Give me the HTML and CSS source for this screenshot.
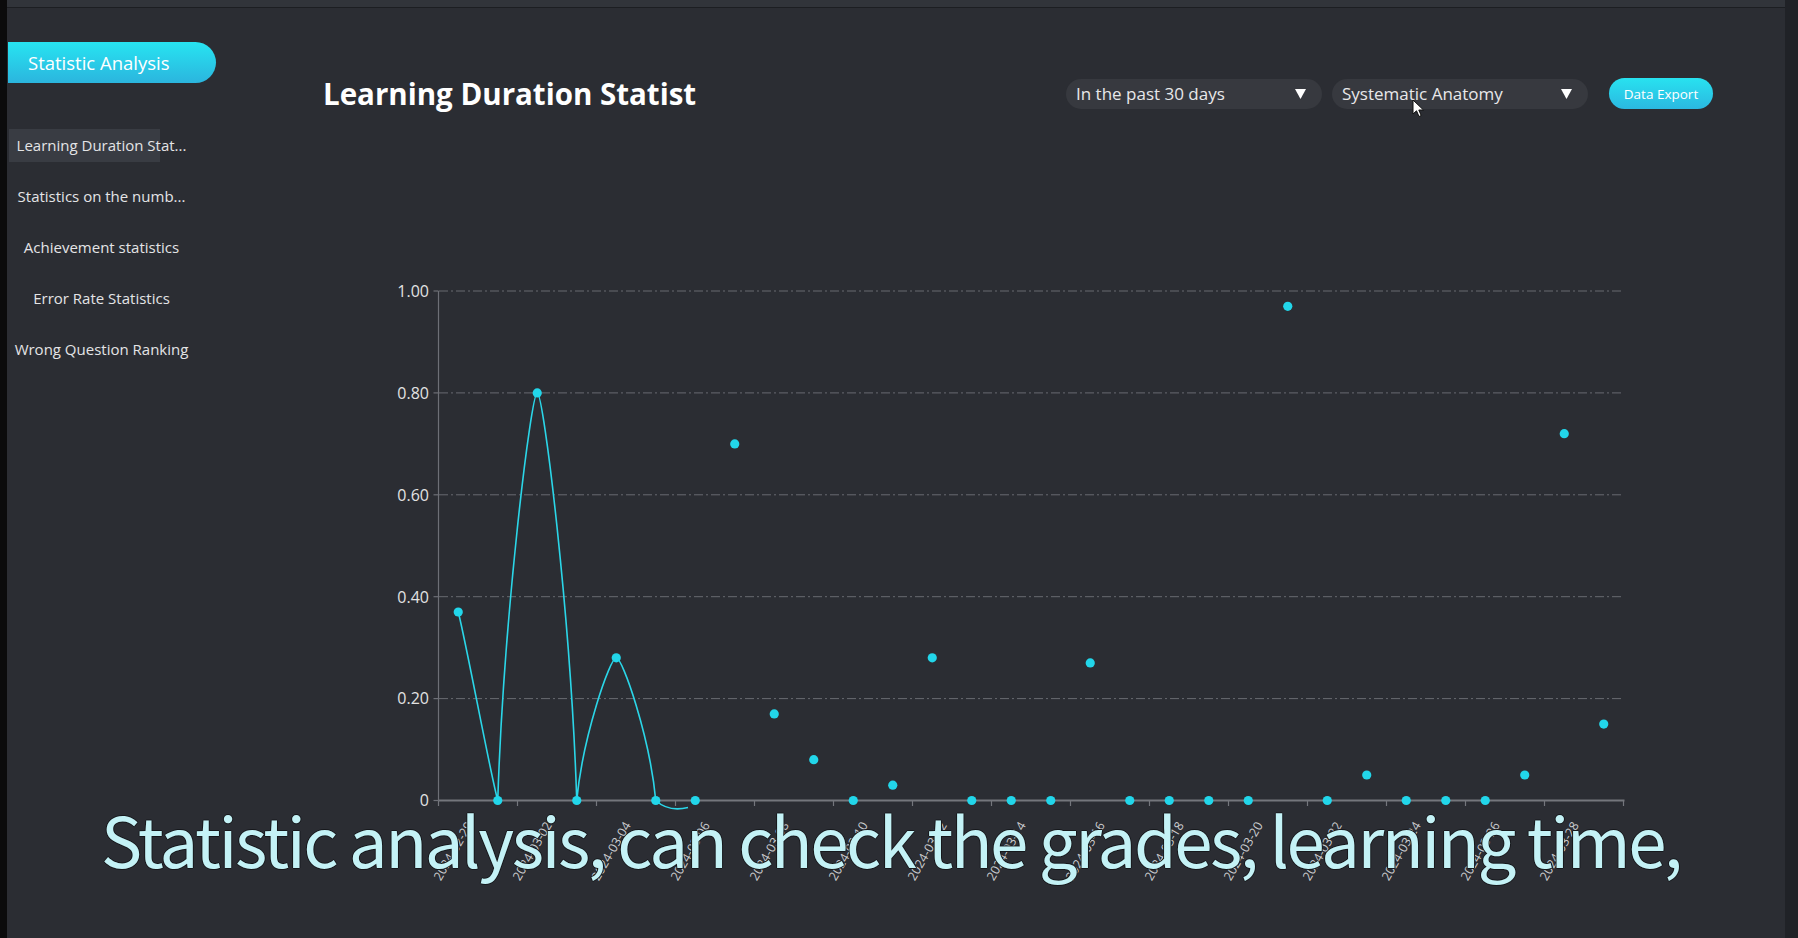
FILE: index.html
```html
<!DOCTYPE html>
<html lang="en">
<head>
<meta charset="utf-8">
<title>Learning Duration Statistics</title>
<link rel="stylesheet" href="styles.css">
</head>
<body>
<div class="app">
  <div class="edge-left"></div>
  <div class="frame">
    <div class="topbar"></div>
    <div class="content">
      <aside class="sidebar">
        <div class="side-head">Statistic Analysis</div>
        <ul class="menu">
          <li class="menu-item active">Learning Duration Stat...</li>
          <li class="menu-item">Statistics on the numb...</li>
          <li class="menu-item">Achievement statistics</li>
          <li class="menu-item">Error Rate Statistics</li>
          <li class="menu-item">Wrong Question Ranking</li>
        </ul>
      </aside>
      <main class="main">
        <header class="header">
          <h1 class="title">Learning Duration Statist</h1>
          <div class="controls">
            <div class="select"><span>In the past 30 days</span><svg class="caret" width="11" height="10" viewBox="0 0 11 10"><polygon points="0,0 11,0 5.5,10" fill="#ffffff"/></svg></div>
            <div class="select"><span>Systematic Anatomy</span><svg class="caret" width="11" height="10" viewBox="0 0 11 10"><polygon points="0,0 11,0 5.5,10" fill="#ffffff"/></svg></div>
            <button class="export">Data Export</button>
          </div>
        </header>
        <svg class="chart" width="1568" height="829" viewBox="217 109 1568 829">
          <g class="grid" stroke="#686a71" stroke-width="1" stroke-dasharray="9 3 2 3" fill="none">
            <line x1="439" y1="291" x2="1623.5" y2="291"/>
            <line x1="439" y1="392.9" x2="1623.5" y2="392.9"/>
            <line x1="439" y1="494.8" x2="1623.5" y2="494.8"/>
            <line x1="439" y1="596.7" x2="1623.5" y2="596.7"/>
            <line x1="439" y1="698.6" x2="1623.5" y2="698.6"/>
          </g>
          <g stroke="#6d6f76" stroke-width="1.2" fill="none">
            <line x1="438.5" y1="291" x2="438.5" y2="800.5"/>
            <line x1="433.5" y1="291" x2="438.5" y2="291"/>
            <line x1="433.5" y1="392.9" x2="438.5" y2="392.9"/>
            <line x1="433.5" y1="494.8" x2="438.5" y2="494.8"/>
            <line x1="433.5" y1="596.7" x2="438.5" y2="596.7"/>
            <line x1="433.5" y1="698.6" x2="438.5" y2="698.6"/>
            <line x1="433.5" y1="800.5" x2="438.5" y2="800.5"/>
          </g>
          <g class="ylabels" fill="#e2e2e2" font-size="16" text-anchor="end">
            <text x="429" y="296.8">1.00</text>
            <text x="429" y="398.7">0.80</text>
            <text x="429" y="500.6">0.60</text>
            <text x="429" y="602.5">0.40</text>
            <text x="429" y="704.4">0.20</text>
            <text x="429" y="806.3">0</text>
          </g>
          <g stroke="#74767c" fill="none">
            <line x1="438.5" y1="800.5" x2="1624.5" y2="800.5" stroke-width="2"/>
            <g stroke-width="1.2">
              <line x1="438.5" y1="800.5" x2="438.5" y2="806"/>
              <line x1="517.5" y1="800.5" x2="517.5" y2="806"/>
              <line x1="596.5" y1="800.5" x2="596.5" y2="806"/>
              <line x1="675.5" y1="800.5" x2="675.5" y2="806"/>
              <line x1="754.5" y1="800.5" x2="754.5" y2="806"/>
              <line x1="833.5" y1="800.5" x2="833.5" y2="806"/>
              <line x1="912.5" y1="800.5" x2="912.5" y2="806"/>
              <line x1="991.5" y1="800.5" x2="991.5" y2="806"/>
              <line x1="1070.5" y1="800.5" x2="1070.5" y2="806"/>
              <line x1="1149.5" y1="800.5" x2="1149.5" y2="806"/>
              <line x1="1228.5" y1="800.5" x2="1228.5" y2="806"/>
              <line x1="1307.5" y1="800.5" x2="1307.5" y2="806"/>
              <line x1="1386.5" y1="800.5" x2="1386.5" y2="806"/>
              <line x1="1465.5" y1="800.5" x2="1465.5" y2="806"/>
              <line x1="1544.5" y1="800.5" x2="1544.5" y2="806"/>
              <line x1="1623.5" y1="800.5" x2="1623.5" y2="806"/>
            </g>
          </g>
          <g class="xlabels" fill="#cdced1" font-size="12.5" text-anchor="end">
            <text x="473.25" y="825" transform="rotate(-60 473.25 825)">2024-02-29</text>
            <text x="552.25" y="825" transform="rotate(-60 552.25 825)">2024-03-02</text>
            <text x="631.25" y="825" transform="rotate(-60 631.25 825)">2024-03-04</text>
            <text x="710.25" y="825" transform="rotate(-60 710.25 825)">2024-03-06</text>
            <text x="789.25" y="825" transform="rotate(-60 789.25 825)">2024-03-08</text>
            <text x="868.25" y="825" transform="rotate(-60 868.25 825)">2024-03-10</text>
            <text x="947.25" y="825" transform="rotate(-60 947.25 825)">2024-03-12</text>
            <text x="1026.25" y="825" transform="rotate(-60 1026.25 825)">2024-03-14</text>
            <text x="1105.25" y="825" transform="rotate(-60 1105.25 825)">2024-03-16</text>
            <text x="1184.25" y="825" transform="rotate(-60 1184.25 825)">2024-03-18</text>
            <text x="1263.25" y="825" transform="rotate(-60 1263.25 825)">2024-03-20</text>
            <text x="1342.25" y="825" transform="rotate(-60 1342.25 825)">2024-03-22</text>
            <text x="1421.25" y="825" transform="rotate(-60 1421.25 825)">2024-03-24</text>
            <text x="1500.25" y="825" transform="rotate(-60 1500.25 825)">2024-03-26</text>
            <text x="1579.25" y="825" transform="rotate(-60 1579.25 825)">2024-03-28</text>
          </g>
          <path class="series" fill="none" stroke="#2bd6e8" stroke-width="1.6" d="M458.25 612 C466 642 490 772 497.75 800.5 C503.7 617 531 392.9 537.25 392.9 C543.5 392.9 570.8 617 576.75 800.5 C582.7 736.7 610 657.8 616.25 657.8 C622.5 657.8 649.8 736.7 655.75 800.5 C664 808 674 811 688 807.5"/>
          <g class="dots" fill="#22d6ea">
            <circle cx="458.25" cy="612" r="4.6"/>
            <circle cx="497.75" cy="800.5" r="4.6"/>
            <circle cx="537.25" cy="392.9" r="4.6"/>
            <circle cx="576.75" cy="800.5" r="4.6"/>
            <circle cx="616.25" cy="657.8" r="4.6"/>
            <circle cx="655.75" cy="800.5" r="4.6"/>
            <circle cx="695.25" cy="800.5" r="4.6"/>
            <circle cx="734.75" cy="443.9" r="4.6"/>
            <circle cx="774.25" cy="713.9" r="4.6"/>
            <circle cx="813.75" cy="759.7" r="4.6"/>
            <circle cx="853.25" cy="800.5" r="4.6"/>
            <circle cx="892.75" cy="785.2" r="4.6"/>
            <circle cx="932.25" cy="657.8" r="4.6"/>
            <circle cx="971.75" cy="800.5" r="4.6"/>
            <circle cx="1011.25" cy="800.5" r="4.6"/>
            <circle cx="1050.75" cy="800.5" r="4.6"/>
            <circle cx="1090.25" cy="662.9" r="4.6"/>
            <circle cx="1129.75" cy="800.5" r="4.6"/>
            <circle cx="1169.25" cy="800.5" r="4.6"/>
            <circle cx="1208.75" cy="800.5" r="4.6"/>
            <circle cx="1248.25" cy="800.5" r="4.6"/>
            <circle cx="1287.75" cy="306.3" r="4.6"/>
            <circle cx="1327.25" cy="800.5" r="4.6"/>
            <circle cx="1366.75" cy="775" r="4.6"/>
            <circle cx="1406.25" cy="800.5" r="4.6"/>
            <circle cx="1445.75" cy="800.5" r="4.6"/>
            <circle cx="1485.25" cy="800.5" r="4.6"/>
            <circle cx="1524.75" cy="775" r="4.6"/>
            <circle cx="1564.25" cy="433.7" r="4.6"/>
            <circle cx="1603.75" cy="724.1" r="4.6"/>
          </g>
        </svg>
      </main>
    </div>
  </div>
  <div class="edge-right"></div>
  <div class="caption">Statistic analysis, can check the grades, learning time,</div>
  <svg class="cursor" width="13" height="19" viewBox="0 0 13 19"><path d="M1 1 L1 15 L4.5 11.8 L7 17.5 L9.2 16.5 L6.8 11 L11.5 11 Z" fill="#ffffff" stroke="#111111" stroke-width="1"/></svg>
</div>
</body>
</html>
```

FILE: styles.css
```css
html, body {
  margin: 0;
  padding: 0;
}

body {
  background: #2b2d33;
  font-family: "Open Sans", "Liberation Sans", sans-serif;
  overflow: hidden;
}

.app {
  position: relative;
  display: flex;
  width: 1798px;
  height: 938px;
  background: #2b2d33;
}

.edge-left {
  flex: none;
  width: 7px;
  background: #0b0b0c;
}

.edge-right {
  flex: none;
  width: 13px;
  background: #202227;
}

.frame {
  flex: 1;
  min-width: 0;
  display: flex;
  flex-direction: column;
}

.topbar {
  flex: none;
  height: 7px;
  background: #31343a;
  border-bottom: 1px solid #1c1e22;
}

.content {
  flex: 1;
  display: flex;
  min-height: 0;
}

.sidebar {
  flex: none;
  width: 210px;
  padding-left: 1px;
  box-sizing: border-box;
}

.side-head {
  margin-top: 34px;
  width: 208px;
  height: 41px;
  box-sizing: border-box;
  padding-left: 20px;
  border-radius: 0 21px 21px 0;
  background: linear-gradient(180deg, #27e4f1 0%, #2bb5de 100%);
  color: #ffffff;
  font-size: 18.5px;
  line-height: 41px;
  white-space: nowrap;
}

.menu {
  list-style: none;
  margin: 46px 0 0;
  padding: 0;
  width: 187px;
  display: flex;
  flex-direction: column;
  gap: 18px;
}

.menu-item {
  height: 33px;
  line-height: 33px;
  text-align: center;
  font-size: 15px;
  color: #e4e4e6;
  white-space: nowrap;
}

.menu-item.active {
  background: linear-gradient(90deg, transparent 0, transparent 1px, #393c43 1px, #393c43 152px, transparent 152px);
}

.main {
  flex: 1;
  min-width: 0;
  display: flex;
  flex-direction: column;
}

.header {
  margin-top: 70px;
  height: 31px;
  display: flex;
  align-items: center;
  justify-content: space-between;
  padding: 0 72px 0 106px;
}

.title {
  margin: 0;
  font-size: 29.5px;
  font-weight: 700;
  line-height: 31px;
  color: #ffffff;
  white-space: nowrap;
}

.controls {
  display: flex;
  align-items: center;
}

.select {
  width: 256px;
  height: 30px;
  box-sizing: border-box;
  padding: 0 16px 0 10px;
  border-radius: 15px;
  background: #37393f;
  display: flex;
  align-items: center;
  justify-content: space-between;
  font-size: 17px;
  color: #e8e8ea;
  white-space: nowrap;
}

.select + .select {
  margin-left: 10px;
}

.caret {
  display: block;
  flex: none;
}

.export {
  margin-left: 21px;
  width: 104px;
  height: 31px;
  padding: 0;
  border: 0;
  border-radius: 16px;
  background: linear-gradient(180deg, #28e2f0 0%, #2bb8e0 100%);
  color: #ffffff;
  font-family: inherit;
  font-size: 13.5px;
}

.chart {
  display: block;
  flex: none;
  font-family: "Open Sans", "Liberation Sans", sans-serif;
}

.caption {
  position: absolute;
  left: 101px;
  top: 798px;
  font-family: "Noto Sans CJK SC", "Noto Sans", sans-serif;
  font-size: 69px;
  line-height: 80px;
  letter-spacing: -2.5px;
  color: #c4f2f6;
  white-space: nowrap;
  text-shadow: 1px 0 0 #16181c, -1px 0 0 #16181c, 0 1px 0 #16181c, 0 -1px 0 #16181c;
}

.cursor {
  position: absolute;
  left: 1412px;
  top: 99px;
}
```
